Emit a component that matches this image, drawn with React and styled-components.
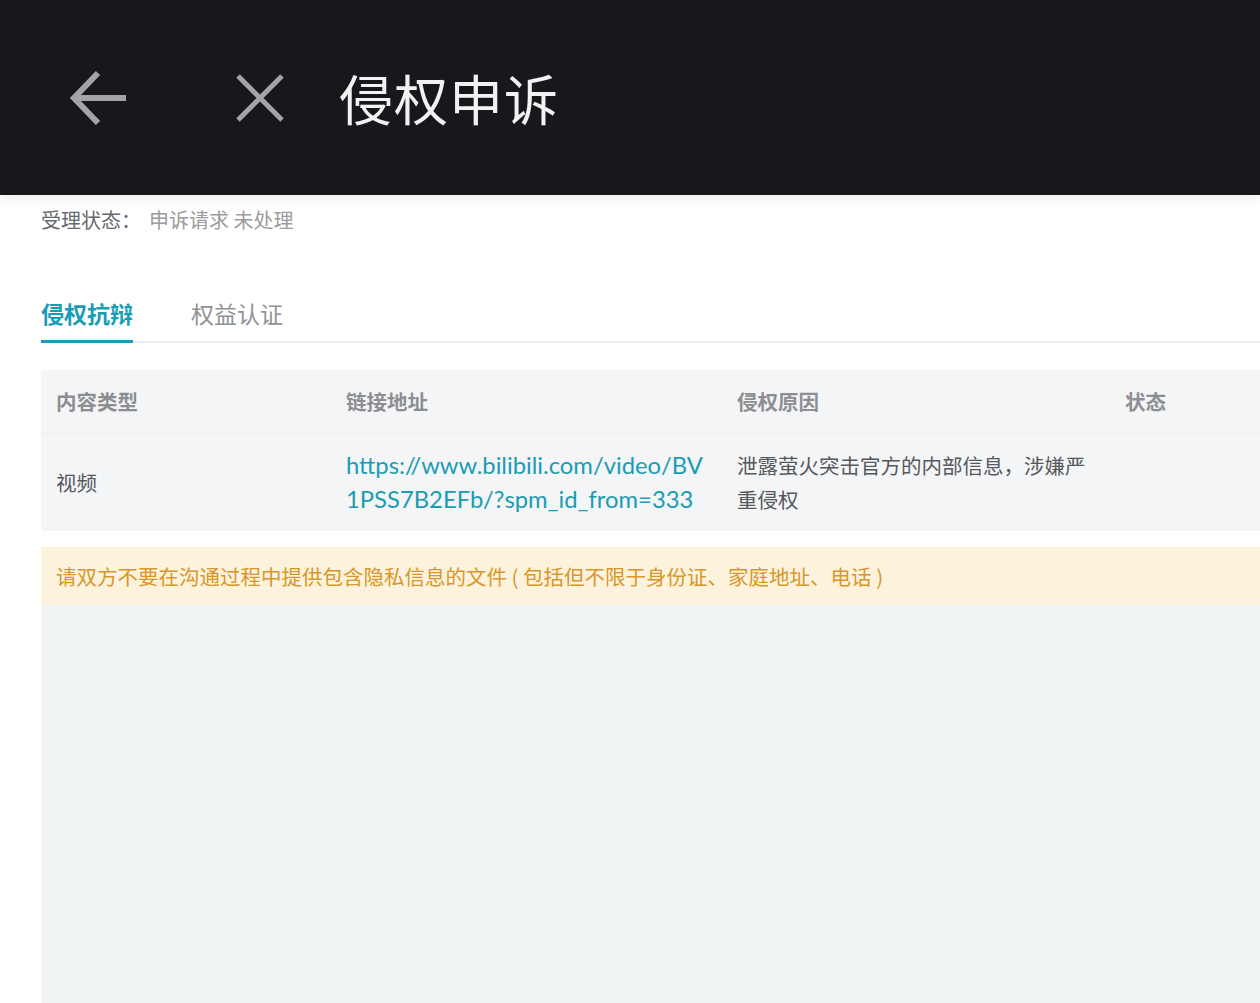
import styled, { createGlobalStyle } from 'styled-components';

const GlobalStyle = createGlobalStyle`
  html, body {
    margin: 0;
    padding: 0;
    background: #ffffff;
    overflow: hidden;
  }
  body {
    font-family: "Noto Sans", "Noto Sans CJK SC", sans-serif;
  }
`;

const Page = styled.div`
  width: 1260px;
  height: 1003px;
  display: flex;
  flex-direction: column;
  overflow: hidden;
`;

const TopBar = styled.header`
  height: 195px;
  flex-shrink: 0;
  background: #17181c;
  display: flex;
  align-items: center;
  padding-left: 68px;
  position: relative;
  z-index: 1;
  box-shadow: 0 4px 14px rgba(0, 0, 0, 0.08);
`;

const IconButton = styled.button`
  background: none;
  border: none;
  padding: 0;
  margin-right: ${({ $gap }) => $gap}px;
  display: flex;
  align-items: center;
  justify-content: center;
  color: #a3a3a8;
  cursor: pointer;
`;

const Title = styled.h1`
  margin: 0;
  font-family: "Noto Sans CJK SC", sans-serif;
  font-weight: 400;
  font-size: 54px;
  letter-spacing: 1px;
  color: #f2f2f2;
`;

const Content = styled.main`
  flex: 1;
  display: flex;
  flex-direction: column;
  padding-left: 41px;
  min-height: 0;
`;

const StatusLine = styled.div`
  height: 48px;
  display: flex;
  align-items: center;
  font-family: "Noto Sans CJK SC", sans-serif;
  font-size: 20px;
  color: #666a70;
`;

const StatusValue = styled.span`
  color: #9a9ca0;
  margin-left: 8px;
`;

const Tabs = styled.nav`
  margin-top: 53px;
  display: flex;
  gap: 58px;
  border-bottom: 2px solid #eceef0;
`;

const Tab = styled.div`
  font-family: "Noto Sans CJK SC", sans-serif;
  font-size: 23px;
  font-weight: ${({ $active }) => ($active ? 700 : 400)};
  color: ${({ $active }) => ($active ? '#1a9cb4' : '#8f9296')};
  padding-bottom: 10px;
  line-height: 34px;
  margin-bottom: -2px;
  border-bottom: 3px solid ${({ $active }) => ($active ? '#1a9cb4' : 'transparent')};
`;

const Table = styled.div`
  margin-top: 27px;
  background: #f4f5f7;
  border-radius: 4px 0 0 4px;
  display: grid;
  grid-template-columns: 290px 391px 388px 1fr;
  width: calc(100% + 40px);
`;

const HeadCell = styled.div`
  height: 62px;
  display: flex;
  align-items: center;
  padding-left: 15px;
  font-family: "Noto Sans CJK SC", sans-serif;
  font-size: 20.5px;
  font-weight: 700;
  color: #8c8e92;
  border-bottom: 1px solid #eef0f2;
`;

const Cell = styled.div`
  min-height: 98px;
  display: flex;
  align-items: center;
  padding: 0 ${({ $padRight }) => $padRight ?? 16}px 0 15px;
  font-family: "Noto Sans CJK SC", sans-serif;
  font-size: 20.5px;
  line-height: 34px;
  color: #55585c;
`;

const LinkText = styled.a`
  font-family: Lato, "Noto Sans", sans-serif;
  font-size: 23.8px;
  line-height: 34px;
  color: #1a9cb4;
  text-decoration: none;
  word-break: break-all;
`;

const Notice = styled.div`
  margin-top: 16px;
  height: 58px;
  display: flex;
  align-items: center;
  padding-left: 15px;
  background: #fdf3dc;
  font-family: "Noto Sans CJK SC", sans-serif;
  font-size: 20.5px;
  color: #d8962b;
  white-space: pre;
`;

const ChatArea = styled.section`
  flex: 1;
  background: #f0f4f5;
`;

const ArrowIcon = () => (
  <svg width="60" height="60" viewBox="0 0 60 60" fill="none" stroke="currentColor" strokeWidth="6" strokeLinecap="butt" strokeLinejoin="miter">
    <path d="M58 30H7" />
    <path d="M30 5L6 30L30 55" />
  </svg>
);

const CloseIcon = () => (
  <svg width="50" height="50" viewBox="0 0 50 50" fill="none" stroke="currentColor" strokeWidth="5">
    <path d="M3 3L47 47" />
    <path d="M47 3L3 47" />
  </svg>
);

const App = () => {
  return (
    <>
      <GlobalStyle />
      <Page>
        <TopBar>
          <IconButton $gap={107}>
            <ArrowIcon />
          </IconButton>
          <IconButton $gap={54}>
            <CloseIcon />
          </IconButton>
          <Title>侵权申诉</Title>
        </TopBar>
        <Content>
          <StatusLine>
            受理状态：<StatusValue>申诉请求 未处理</StatusValue>
          </StatusLine>
          <Tabs>
            <Tab $active>侵权抗辩</Tab>
            <Tab>权益认证</Tab>
          </Tabs>
          <Table>
            <HeadCell>内容类型</HeadCell>
            <HeadCell>链接地址</HeadCell>
            <HeadCell>侵权原因</HeadCell>
            <HeadCell>状态</HeadCell>
            <Cell>视频</Cell>
            <Cell $padRight={10}>
              <LinkText href="#">https://www.bilibili.com/video/BV1PSS7B2EFb/?spm_id_from=333</LinkText>
            </Cell>
            <Cell>泄露萤火突击官方的内部信息，涉嫌严重侵权</Cell>
            <Cell />
          </Table>
          <Notice>{'请双方不要在沟通过程中提供包含隐私信息的文件 ( 包括但不限于身份证、家庭地址、电话 )'}</Notice>
          <ChatArea />
        </Content>
      </Page>
    </>
  );
};

export default App;
